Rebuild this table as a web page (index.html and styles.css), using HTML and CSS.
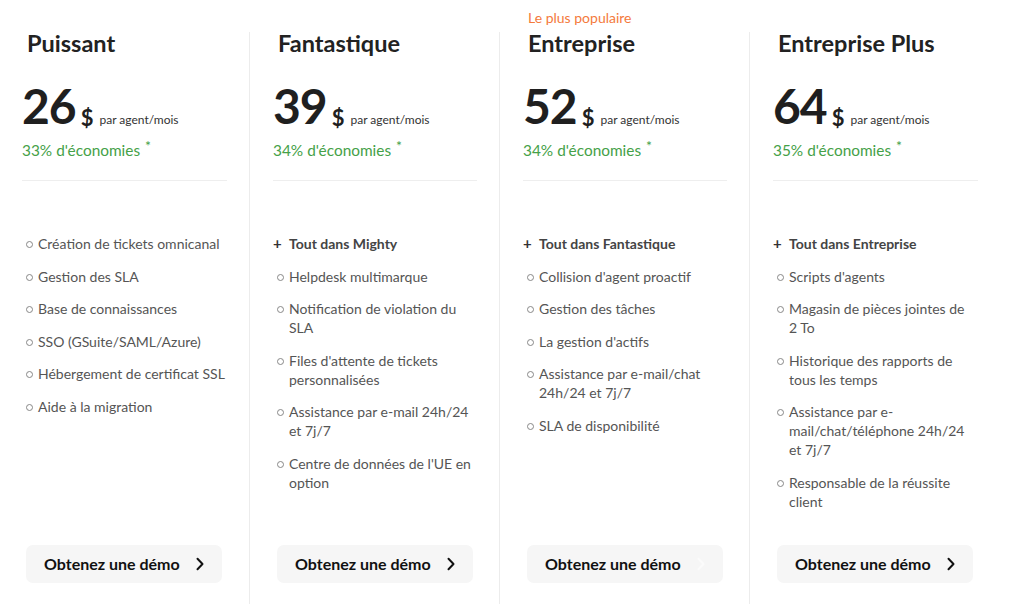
FILE: index.html
```html
<!DOCTYPE html>
<html lang="fr">
<head>
<meta charset="utf-8">
<title>Tarifs</title>
<link rel="stylesheet" href="styles.css">
</head>
<body>
<div class="plans">
  <section class="plan">
    <h2 class="plan-name">Puissant</h2>
    <div class="price"><span class="amount">26</span><span class="cur">$</span><span class="per">par agent/mois</span></div>
    <div class="save">33% d'économies <sup>*</sup></div>
    <ul class="features">
      <li>Création de tickets omnicanal</li>
      <li>Gestion des SLA</li>
      <li>Base de connaissances</li>
      <li>SSO (GSuite/SAML/Azure)</li>
      <li>Hébergement de certificat SSL</li>
      <li>Aide à la migration</li>
    </ul>
    <a class="demo" href="#">Obtenez une démo <svg class="chev" viewBox="0 0 10 14" width="10" height="14"><path d="M2.5 1.8 L7.5 7 L2.5 12.2" fill="none" stroke="currentColor" stroke-width="2" stroke-linecap="round" stroke-linejoin="round"/></svg></a>
  </section>
  <section class="plan">
    <h2 class="plan-name">Fantastique</h2>
    <div class="price"><span class="amount">39</span><span class="cur">$</span><span class="per">par agent/mois</span></div>
    <div class="save">34% d'économies <sup>*</sup></div>
    <ul class="features">
      <li class="plus">Tout dans Mighty</li>
      <li>Helpdesk multimarque</li>
      <li>Notification de violation du SLA</li>
      <li>Files d'attente de tickets personnalisées</li>
      <li>Assistance par e-mail 24h/24 et 7j/7</li>
      <li>Centre de données de l'UE en option</li>
    </ul>
    <a class="demo" href="#">Obtenez une démo <svg class="chev" viewBox="0 0 10 14" width="10" height="14"><path d="M2.5 1.8 L7.5 7 L2.5 12.2" fill="none" stroke="currentColor" stroke-width="2" stroke-linecap="round" stroke-linejoin="round"/></svg></a>
  </section>
  <section class="plan popular">
    <span class="badge">Le plus populaire</span>
    <h2 class="plan-name">Entreprise</h2>
    <div class="price"><span class="amount">52</span><span class="cur">$</span><span class="per">par agent/mois</span></div>
    <div class="save">34% d'économies <sup>*</sup></div>
    <ul class="features">
      <li class="plus">Tout dans Fantastique</li>
      <li>Collision d'agent proactif</li>
      <li>Gestion des tâches</li>
      <li>La gestion d'actifs</li>
      <li>Assistance par e-mail/chat 24h/24 et 7j/7</li>
      <li>SLA de disponibilité</li>
    </ul>
    <a class="demo faded" href="#">Obtenez une démo <svg class="chev" viewBox="0 0 10 14" width="10" height="14"><path d="M2.5 1.8 L7.5 7 L2.5 12.2" fill="none" stroke="currentColor" stroke-width="2" stroke-linecap="round" stroke-linejoin="round"/></svg></a>
  </section>
  <section class="plan last">
    <h2 class="plan-name">Entreprise Plus</h2>
    <div class="price"><span class="amount">64</span><span class="cur">$</span><span class="per">par agent/mois</span></div>
    <div class="save">35% d'économies <sup>*</sup></div>
    <ul class="features">
      <li class="plus">Tout dans Entreprise</li>
      <li>Scripts d'agents</li>
      <li>Magasin de pièces jointes de 2&nbsp;To</li>
      <li>Historique des rapports de tous les temps</li>
      <li>Assistance par e-mail/chat/téléphone 24h/24 et 7j/7</li>
      <li>Responsable de la réussite client</li>
    </ul>
    <a class="demo" href="#">Obtenez une démo <svg class="chev" viewBox="0 0 10 14" width="10" height="14"><path d="M2.5 1.8 L7.5 7 L2.5 12.2" fill="none" stroke="currentColor" stroke-width="2" stroke-linecap="round" stroke-linejoin="round"/></svg></a>
  </section>
</div>
</body>
</html>
```

FILE: styles.css
```css
* { box-sizing: border-box; }
html, body { margin: 0; padding: 0; background: #fff; }
body {
  font-family: "Lato", "Open Sans", "Liberation Sans", sans-serif;
  color: #222;
  height: 604px;
  overflow: hidden;
}
.plans {
  display: grid;
  grid-template-columns: repeat(4, 250px);
  padding-top: 32px;
  height: 604px;
}
.plan {
  position: relative;
  display: flex;
  flex-direction: column;
  padding: 0 22px 21px 23px;
  border-right: 1px solid #ececec;
}
.plan:first-child { padding-left: 22px; }
.plan.last { border-right: none; }
.badge {
  position: absolute;
  top: -22px;
  left: 28px;
  font-size: 14px;
  line-height: 16px;
  color: #f47a3c;
}
.plan-name {
  margin: 0;
  padding-left: 5px;
  font-size: 23.5px;
  line-height: 23px;
  font-weight: 700;
  color: #222;
}
.price {
  display: flex;
  align-items: baseline;
  margin-top: 27px;
  height: 48px;
}
.amount {
  font-size: 48px;
  line-height: 48px;
  font-weight: 700;
  color: #1f1f1f;
  letter-spacing: -1px;
}
.cur {
  font-size: 22px;
  font-weight: 700;
  margin-left: 5px;
  color: #1f1f1f;
  position: relative;
  top: 2px;
}
.per {
  font-size: 12px;
  margin-left: 6px;
  color: #333;
}
.save {
  margin-top: 10px;
  font-size: 15.4px;
  line-height: 20px;
  color: #45a148;
  padding-bottom: 20px;
  border-bottom: 1px solid #eeeeee;
}
.save sup {
  font-size: 14px;
  line-height: 14px;
  vertical-align: top;
  position: relative;
  top: -1px;
  margin-left: 1px;
}
.features {
  list-style: none;
  margin: 53px 0 0;
  padding: 0;
  display: flex;
  flex-direction: column;
  gap: 13.6px;
}
.features li {
  position: relative;
  padding-left: 16px;
  font-size: 14px;
  line-height: 19px;
  color: #555;
}
.features li::before {
  content: "";
  position: absolute;
  left: 4px;
  top: 7px;
  width: 5px;
  height: 5px;
  border: 1px solid #888;
  border-radius: 50%;
}
.features li.plus {
  font-weight: 700;
  color: #444;
}
.features li.plus::before {
  content: "+";
  border: none;
  width: auto;
  height: auto;
  left: 0;
  top: 0;
  font-size: 15px;
  font-weight: 700;
  color: #333;
}
.demo {
  margin-top: auto;
  margin-left: 4px;
  width: 196px;
  height: 38px;
  display: flex;
  align-items: center;
  justify-content: space-between;
  padding: 0 17px 2px 18px;
  background: #f6f6f6;
  border-radius: 7px;
  color: #111;
  text-decoration: none;
  font-size: 16px;
  font-weight: 700;
}
.chev { display: block; margin-top: 2px; }
.demo.faded .chev { color: #fbfbfb; }
```
